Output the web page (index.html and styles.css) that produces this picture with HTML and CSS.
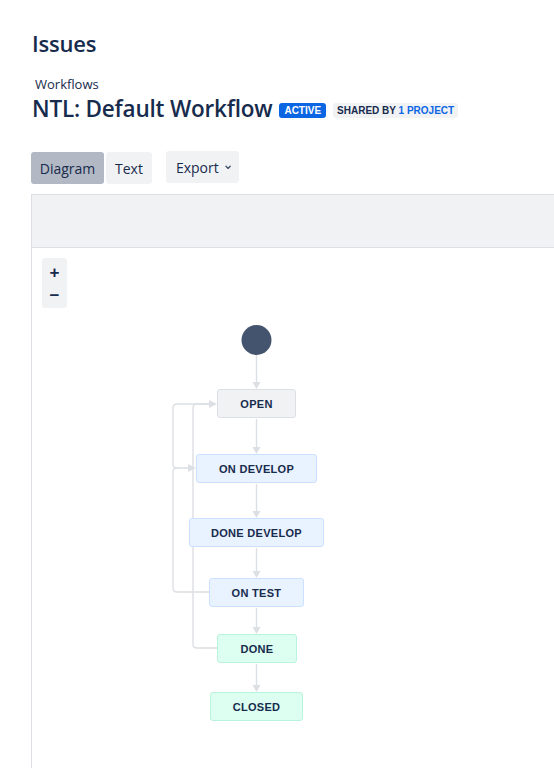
FILE: index.html
```html
<!DOCTYPE html>
<html>
<head>
<meta charset="utf-8">
<link rel="stylesheet" href="styles.css">
</head>
<body>
<div class="page">
  <h1 class="app-title">Issues</h1>
  <div class="crumb">Workflows</div>
  <div class="title-row">
    <h2 class="wf-title">NTL: Default Workflow</h2>
    <span class="badge badge-active">ACTIVE</span>
    <span class="badge badge-shared">SHARED BY <span class="link">1 PROJECT</span></span>
  </div>
  <div class="toolbar">
    <div class="seg">
      <button class="btn btn-selected">Diagram</button>
      <button class="btn">Text</button>
    </div>
    <button class="btn btn-export">Export
      <svg class="chev" width="9" height="7" viewBox="0 0 9 7"><path d="M1.5 1.8 L4.5 4.8 L7.5 1.8" fill="none" stroke="#44546F" stroke-width="2" stroke-linecap="round" stroke-linejoin="round"/></svg>
    </button>
  </div>
  <div class="diagram">
    <div class="diagram-bar"></div>
    <div class="canvas">
      <div class="zoom">
        <span class="zbtn">+</span>
        <span class="zbtn">&minus;</span>
      </div>
      <svg class="edges" width="522" height="520" viewBox="32 248 522 520">
        <g fill="none" stroke="#DCDFE4" stroke-width="1.4">
          <path d="M256.5 355 V384"/>
          <path d="M256.5 419 V449"/>
          <path d="M256.5 484 V513"/>
          <path d="M256.5 548 V573"/>
          <path d="M256.5 608 V629"/>
          <path d="M256.5 664 V687"/>
          <path d="M209 592 H177 Q173 592 173 588 V472 Q173 468 177 468 H191"/>
          <path d="M177 468 Q173 468 173 464 V408 Q173 404 177 404 H212"/>
          <path d="M217 648 H197 Q193 648 193 644 V408 Q193 404 197 404 H212"/>
        </g>
        <g fill="#DCDFE4">
          <path d="M252.5 382 H260.5 L256.5 389 Z"/>
          <path d="M252.5 447 H260.5 L256.5 454 Z"/>
          <path d="M252.5 511 H260.5 L256.5 518 Z"/>
          <path d="M252.5 571 H260.5 L256.5 578 Z"/>
          <path d="M252.5 627 H260.5 L256.5 634 Z"/>
          <path d="M252.5 685 H260.5 L256.5 692 Z"/>
          <path d="M209 400 V408 L217 404 Z"/>
          <path d="M188 464 V472 L196 468 Z"/>
        </g>
        <circle cx="256.5" cy="340" r="15" fill="#44546F"/>
      </svg>
      <div class="node n-gray" style="left:185px;top:141px;width:79px">OPEN</div>
      <div class="node n-blue" style="left:164px;top:206px;width:121px">ON DEVELOP</div>
      <div class="node n-blue" style="left:157px;top:270px;width:135px">DONE DEVELOP</div>
      <div class="node n-blue" style="left:177px;top:330px;width:95px">ON TEST</div>
      <div class="node n-green" style="left:185px;top:386px;width:80px">DONE</div>
      <div class="node n-green" style="left:178px;top:444px;width:93px">CLOSED</div>
    </div>
  </div>
</div>
</body>
</html>
```
FILE: styles.css
```css
* { box-sizing: border-box; }
html, body { margin: 0; padding: 0; background: #fff; }
body {
  font-family: "Open Sans", "Liberation Sans", sans-serif;
  color: #172B4D;
  width: 554px;
  height: 768px;
  overflow: hidden;
}
.page {
  padding: 28px 0 0 32px;
}
.app-title {
  margin: 0;
  font-size: 22px;
  font-weight: 600;
  line-height: 30px;
  letter-spacing: -0.2px;
}
.crumb {
  margin-top: 17px;
  margin-left: 3px;
  font-size: 13px;
  line-height: 18px;
}
.title-row {
  display: flex;
  align-items: center;
  gap: 7px;
  height: 31px;
}
.wf-title {
  margin: 0;
  font-size: 22.5px;
  font-weight: 600;
  line-height: 31px;
  letter-spacing: -0.2px;
}
.badge {
  font-family: "Liberation Sans", sans-serif;
  font-size: 10px;
  font-weight: 700;
  line-height: 15px;
  height: 15px;
  padding: 0 4px;
  border-radius: 3px;
  margin-top: 3px;
}
.badge-active {
  background: #0C66E4;
  color: #fff;
  padding: 0 5px;
}
.badge-shared {
  background: #F1F2F4;
  color: #172B4D;
}
.badge-shared .link { color: #0C66E4; }
.toolbar {
  display: flex;
  gap: 14px;
  margin-top: 28px;
  margin-left: -1px;
}
.seg { display: flex; gap: 2px; }
.btn {
  font-family: "Open Sans", "Liberation Sans", sans-serif;
  font-size: 14px;
  color: #172B4D;
  background: #F1F2F4;
  border: 0;
  border-radius: 3px;
  height: 32px;
  padding: 0 9px;
  display: flex;
  align-items: center;
  gap: 6px;
}
.btn-selected { background: #B3B9C4; width: 73px; justify-content: center; }
.btn-export { height: 32px; margin-top: -1px; padding: 0 8px 0 10px; width: 73px; }
.chev { margin-top: 1px; }
.diagram {
  margin-top: 10px;
  margin-left: -1px;
  width: 523px;
  height: 600px;
  border-left: 1px solid #DCDFE4;
  border-top: 1px solid #DCDFE4;
}
.diagram-bar {
  height: 53px;
  background: #F1F2F4;
  border-bottom: 1px solid #DCDFE4;
}
.canvas {
  position: relative;
  height: 520px;
}
.edges {
  position: absolute;
  left: 0;
  top: 0;
}
.zoom {
  position: absolute;
  left: 10px;
  top: 10px;
  width: 25px;
  height: 50px;
  background: #F1F2F4;
  border-radius: 3px;
  display: flex;
  flex-direction: column;
  align-items: center;
  padding-top: 3px;
}
.zbtn {
  height: 23px;
  line-height: 23px;
  font-family: "Liberation Sans", sans-serif;
  font-size: 17px;
  font-weight: 700;
  color: #172B4D;
}
.node {
  position: absolute;
  height: 29px;
  border-radius: 3px;
  border: 1px solid;
  display: flex;
  align-items: center;
  justify-content: center;
  font-family: "Liberation Sans", sans-serif;
  font-size: 11px;
  font-weight: 700;
  letter-spacing: 0.3px;
  color: #172B4D;
}
.n-gray { background: #F1F2F4; border-color: #DCDFE4; }
.n-blue { background: #E9F2FF; border-color: #CCE0FF; }
.n-green { background: #DCFFF1; border-color: #BAF3DB; }
```
